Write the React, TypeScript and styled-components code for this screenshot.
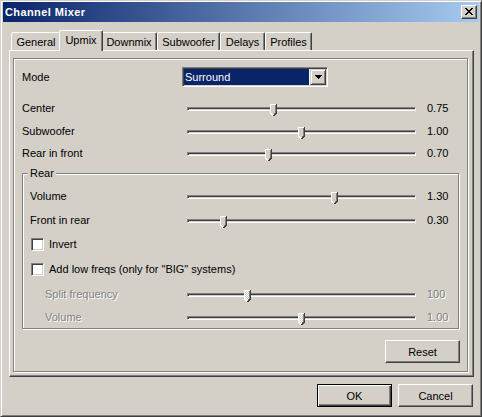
import React from "react";
import styled, { createGlobalStyle, css } from "styled-components";

const FACE = "#d4d0c8";
const SHADOW = "#808080";
const DARK = "#404040";
const HILITE = "#ffffff";
const NAVY = "#0a246a";
const FONT = `"Liberation Sans", Arial, sans-serif`;

const Global = createGlobalStyle`
  html, body { margin: 0; padding: 0; background: ${FACE}; }
  body { font-family: ${FONT}; font-size: 11px; }
`;

const Window = styled.div`
  box-sizing: border-box;
  width: 482px;
  height: 417px;
  background: ${FACE};
  border: 1px solid;
  border-color: ${FACE} ${DARK} ${DARK} ${FACE};
  box-shadow: inset 1px 1px 0 ${HILITE}, inset -1px -1px 0 ${SHADOW};
  padding: 1px 2px 2px 2px;
  display: flex;
  flex-direction: column;
  font-family: ${FONT};
  font-size: 11px;
  color: #000;
`;

const TitleBar = styled.div`
  flex: none;
  height: 20px;
  background: linear-gradient(to right, ${NAVY}, #a6caf0);
  display: flex;
  align-items: center;
  justify-content: space-between;
  padding: 0 2px;
`;

const TitleText = styled.span`
  color: #fff;
  font-weight: bold;
  font-size: 11px;
  letter-spacing: 0.4px;
  line-height: 13px;
`;

const CloseButton = styled.div`
  box-sizing: border-box;
  width: 16px;
  height: 14px;
  background: ${FACE};
  border: 1px solid;
  border-color: ${HILITE} ${DARK} ${DARK} ${HILITE};
  box-shadow: inset -1px -1px 0 ${SHADOW};
  display: flex;
  align-items: center;
  justify-content: center;
  padding: 0 1px 1px 0;
`;

const Body = styled.div`
  flex: 1;
  display: flex;
  flex-direction: column;
  padding: 8px 5px 0 6px;
`;

const TabStrip = styled.div`
  flex: none;
  height: 20px;
  display: flex;
  align-items: flex-end;
  padding-left: 2px;
  position: relative;
  z-index: 1;
`;

const Tab = styled.div<{ $w: number; $active?: boolean }>`
  box-sizing: border-box;
  width: ${(p) => p.$w}px;
  height: 18px;
  background: ${FACE};
  border: 1px solid;
  border-bottom: none;
  border-color: ${HILITE} ${DARK} transparent ${HILITE};
  border-radius: 2px 2px 0 0;
  box-shadow: inset -1px 0 0 ${SHADOW};
  display: flex;
  align-items: center;
  justify-content: center;
  padding-top: 1px;
  white-space: nowrap;
  ${(p) =>
    p.$active &&
    css`
      height: 21px;
      margin: 0 -2px -1px;
      padding-top: 0;
      padding-bottom: 2px;
      position: relative;
      z-index: 2;
    `}
`;

const Panel = styled.div`
  box-sizing: border-box;
  flex: none;
  height: 327px;
  border: 1px solid;
  border-color: ${HILITE} ${DARK} ${DARK} ${HILITE};
  box-shadow: inset -1px -1px 0 ${SHADOW};
  padding: 7px 5px 4px 3px;
  display: flex;
`;

const Frame = styled.div`
  flex: 1;
  box-sizing: border-box;
  border: 1px solid ${SHADOW};
  box-shadow: inset 1px 1px 0 ${HILITE}, 1px 1px 0 ${HILITE};
  padding: 8px 8px 0 8px;
  display: flex;
  flex-direction: column;
`;

const Row = styled.div<{ $h: number; $label: number; $mt?: number }>`
  display: grid;
  grid-template-columns: ${(p) => p.$label}px 239px 1fr;
  align-items: center;
  height: ${(p) => p.$h}px;
  margin-top: ${(p) => p.$mt ?? 0}px;
`;

const Label = styled.span<{ $disabled?: boolean; $indent?: number }>`
  white-space: nowrap;
  padding-left: ${(p) => p.$indent ?? 0}px;
  ${(p) =>
    p.$disabled &&
    css`
      color: ${SHADOW};
      text-shadow: 1px 1px 0 ${HILITE};
    `}
`;

const Value = styled(Label)`
  padding-left: 6px;
`;

const Combo = styled.div`
  box-sizing: border-box;
  width: 146px;
  height: 20px;
  background: #fff;
  border: 1px solid;
  border-color: ${SHADOW} ${HILITE} ${HILITE} ${SHADOW};
  box-shadow: inset 1px 1px 0 ${DARK}, inset -1px -1px 0 ${FACE};
  padding: 1px;
  display: flex;
`;

const ComboValue = styled.div`
  flex: 1;
  background: ${NAVY};
  color: #fff;
  margin-right: 1px;
  padding-left: 1px;
  line-height: 16px;
`;

const ComboButton = styled.div`
  box-sizing: border-box;
  width: 16px;
  height: 16px;
  background: ${FACE};
  border: 1px solid;
  border-color: ${FACE} ${DARK} ${DARK} ${FACE};
  box-shadow: inset 1px 1px 0 ${HILITE}, inset -1px -1px 0 ${SHADOW};
  display: flex;
  align-items: center;
  justify-content: center;
`;

const SliderWrap = styled.div`
  padding: 0 5px;
  margin-top: 2px;
`;

const Track = styled.div`
  position: relative;
  box-sizing: border-box;
  height: 4px;
  border: 1px solid;
  border-color: ${SHADOW} ${HILITE} ${HILITE} ${SHADOW};
  box-shadow: inset 1px 1px 0 ${DARK};
`;

const ThumbSvg = styled.svg`
  position: absolute;
  top: -4px;
  display: block;
`;

const GroupBox = styled.div`
  box-sizing: border-box;
  margin-top: 9px;
  border: 1px solid ${SHADOW};
  box-shadow: inset 1px 1px 0 ${HILITE}, 1px 1px 0 ${HILITE};
  padding: 0 0 0 7px;
  display: flex;
  flex-direction: column;
`;

const GroupTitle = styled.div`
  align-self: flex-start;
  background: ${FACE};
  line-height: 13px;
  padding: 0 2px;
  margin: -7px 0 4px -2px;
`;

const CheckRow = styled.label<{ $h: number }>`
  display: flex;
  align-items: center;
  gap: 5px;
  height: ${(p) => p.$h}px;
  padding-left: 1px;
`;

const CheckBox = styled.span`
  box-sizing: border-box;
  width: 13px;
  height: 13px;
  background: #fff;
  border: 1px solid;
  border-color: ${SHADOW} ${HILITE} ${HILITE} ${SHADOW};
  box-shadow: inset 1px 1px 0 ${DARK}, inset -1px -1px 0 ${FACE};
`;

const Button = styled.div<{ $default?: boolean }>`
  box-sizing: border-box;
  width: 75px;
  height: 23px;
  background: ${FACE};
  border: 1px solid;
  border-color: ${HILITE} ${DARK} ${DARK} ${HILITE};
  box-shadow: inset -1px -1px 0 ${SHADOW};
  display: flex;
  align-items: center;
  justify-content: center;
  ${(p) =>
    p.$default &&
    css`
      border-color: #000;
      box-shadow: inset 1px 1px 0 ${HILITE}, inset -1px -1px 0 ${DARK},
        inset -2px -2px 0 ${SHADOW};
    `}
`;

const ResetButton = styled(Button)`
  align-self: flex-end;
  margin: 11px -1px 0 0;
`;

const ButtonRow = styled.div`
  display: flex;
  justify-content: flex-end;
  gap: 6px;
  margin-top: 7px;
  padding-right: 1px;
`;

function Thumb({ frac, disabled }: { frac: number; disabled?: boolean }) {
  const id = "chk";
  return (
    <ThumbSvg
      width={7}
      height={12}
      viewBox="0 0 7 12"
      shapeRendering="crispEdges"
      style={{ left: `calc(${frac} * (100% - 5px) - 1px)` }}
    >
      {disabled && (
        <defs>
          <pattern id={id} width="2" height="2" patternUnits="userSpaceOnUse">
            <rect width="2" height="2" fill={FACE} />
            <rect width="1" height="1" fill="#fff" />
            <rect x="1" y="1" width="1" height="1" fill="#fff" />
          </pattern>
        </defs>
      )}
      <polygon points="0,0 7,0 7,9 3.5,12 0,9" fill={disabled ? `url(#${id})` : FACE} />
      <path d="M0.5 9V0.5H6" stroke="#fff" fill="none" />
      <path d="M0.5 9L3.5 12" stroke="#fff" fill="none" />
      <path d="M6.5 0V9L3.5 12" stroke={DARK} fill="none" />
      <path d="M5.5 1V8.5L3.5 10.5" stroke={SHADOW} fill="none" />
    </ThumbSvg>
  );
}

function Slider({ frac, disabled }: { frac: number; disabled?: boolean }) {
  return (
    <SliderWrap>
      <Track>
        <Thumb frac={frac} disabled={disabled} />
      </Track>
    </SliderWrap>
  );
}

type SliderRowProps = {
  label: string;
  value: string;
  frac: number;
  h: number;
  labelW: number;
  mt?: number;
  disabled?: boolean;
  indent?: number;
};

function SliderRow({ label, value, frac, h, labelW, mt, disabled, indent }: SliderRowProps) {
  return (
    <Row $h={h} $label={labelW} $mt={mt}>
      <Label $disabled={disabled} $indent={indent}>
        {label}
      </Label>
      <Slider frac={frac} disabled={disabled} />
      <Value $disabled={disabled}>{value}</Value>
    </Row>
  );
}

const tabs = [
  { name: "General", w: 50 },
  { name: "Upmix", w: 44, active: true },
  { name: "Downmix", w: 56 },
  { name: "Subwoofer", w: 63 },
  { name: "Delays", w: 45 },
  { name: "Profiles", w: 47 },
];

const topSliders = [
  { label: "Center", value: "0.75", frac: 0.375, h: 22 },
  { label: "Subwoofer", value: "1.00", frac: 0.5, h: 23 },
  { label: "Rear in front", value: "0.70", frac: 0.35, h: 22 },
];

export default function App() {
  return (
    <>
      <Global />
      <Window>
        <TitleBar>
          <TitleText>Channel Mixer</TitleText>
          <CloseButton>
            <svg width="8" height="7" viewBox="0 0 8 7" shapeRendering="crispEdges">
              <path
                d="M0 0h2v1h-2z M6 0h2v1h-2z M1 1h2v1h-2z M5 1h2v1h-2z M2 2h4v1h-4z M3 3h2v1h-2z M2 4h4v1h-4z M1 5h2v1h-2z M5 5h2v1h-2z M0 6h2v1h-2z M6 6h2v1h-2z"
                fill="#000"
              />
            </svg>
          </CloseButton>
        </TitleBar>
        <Body>
          <TabStrip>
            {tabs.map((t) => (
              <Tab key={t.name} $w={t.w} $active={t.active}>
                {t.name}
              </Tab>
            ))}
          </TabStrip>
          <Panel>
            <Frame>
              <Row $h={20} $label={160}>
                <Label>Mode</Label>
                <Combo>
                  <ComboValue>Surround</ComboValue>
                  <ComboButton>
                    <svg width="7" height="4" viewBox="0 0 7 4" shapeRendering="crispEdges">
                      <path d="M0 0h7v1h-7z M1 1h5v1h-5z M2 2h3v1h-3z M3 3h1v1h-1z" fill="#000" />
                    </svg>
                  </ComboButton>
                </Combo>
                <span />
              </Row>
              {topSliders.map((s, i) => (
                <SliderRow
                  key={s.label}
                  label={s.label}
                  value={s.value}
                  frac={s.frac}
                  h={s.h}
                  labelW={160}
                  mt={i === 0 ? 10 : 0}
                />
              ))}
              <GroupBox>
                <GroupTitle>Rear</GroupTitle>
                <SliderRow label="Volume" value="1.30" frac={0.65} h={24} labelW={152} />
                <SliderRow label="Front in rear" value="0.30" frac={0.15} h={24} labelW={152} />
                <CheckRow $h={24}>
                  <CheckBox />
                  <span>Invert</span>
                </CheckRow>
                <CheckRow $h={26}>
                  <CheckBox />
                  <span>Add low freqs (only for "BIG" systems)</span>
                </CheckRow>
                <SliderRow
                  label="Split frequency"
                  value="100"
                  frac={0.257}
                  h={24}
                  labelW={152}
                  disabled
                  indent={15}
                />
                <SliderRow
                  label="Volume"
                  value="1.00"
                  frac={0.5}
                  h={22}
                  labelW={152}
                  disabled
                  indent={15}
                />
              </GroupBox>
              <ResetButton>Reset</ResetButton>
            </Frame>
          </Panel>
          <ButtonRow>
            <Button $default>OK</Button>
            <Button>Cancel</Button>
          </ButtonRow>
        </Body>
      </Window>
    </>
  );
}
